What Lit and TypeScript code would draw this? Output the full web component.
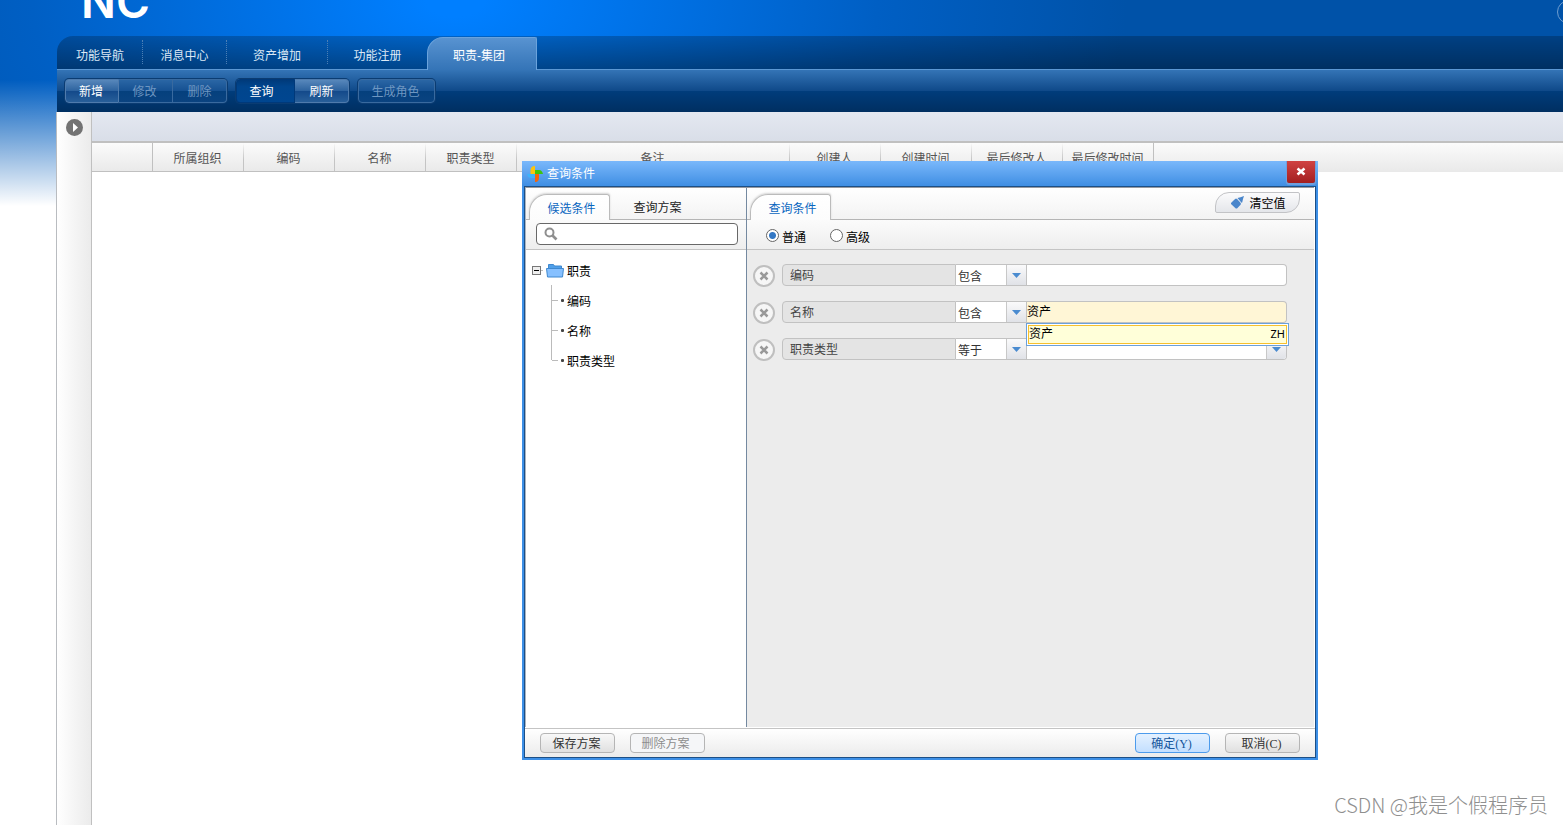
import { LitElement, html, css, svg } from "lit";
import { customElement, state } from "lit/decorators.js";

const TABS = [
  { label: "功能导航", width: 85 },
  { label: "消息中心", width: 84 },
  { label: "资产增加", width: 101 },
  { label: "功能注册", width: 100 },
];

const COLUMNS = [
  { label: "", width: 61 },
  { label: "所属组织", width: 91 },
  { label: "编码", width: 91 },
  { label: "名称", width: 91 },
  { label: "职责类型", width: 91 },
  { label: "备注", width: 273 },
  { label: "创建人", width: 91 },
  { label: "创建时间", width: 91 },
  { label: "最后修改人", width: 91 },
  { label: "最后修改时间", width: 91 },
];

const arrow = svg`<svg class="arrow" width="9" height="5" viewBox="0 0 9 5" aria-hidden="true"><path d="M0 0h9L4.5 5z" fill="#4a8bd0"/></svg>`;

@customElement("query-dialog")
export class QueryDialog extends LitElement {
  @state() private mode = "normal";

  static styles = css`
    :host {
      display: flex;
      flex-direction: column;
      box-sizing: border-box;
      background: #fff;
      border: solid #3d8fe6;
      border-width: 0 2px 2px;
      font: 12px/16px "Liberation Sans", "Noto Sans CJK SC", sans-serif;
      color: #000;
    }
    button, input, select { font: inherit; margin: 0; box-sizing: border-box; }
    .title {
      height: 25px;
      margin: 0 -2px;
      padding: 0 3px 0 5px;
      display: flex;
      align-items: center;
      background: linear-gradient(#7ab8fb, #3f8ee3);
      color: #fff;
    }
    .title svg { margin-right: 4px; }
    .title h1 { margin: 0; flex: 1; font: inherit; }
    .close {
      align-self: flex-start;
      width: 28px;
      height: 22px;
      padding: 0;
      border: 0;
      border-radius: 0 0 2px 2px;
      background: linear-gradient(#d04242, #a31f20);
      box-shadow: 0 1px 0 1px #6f9fdc;
      display: grid;
      place-items: center;
    }
    .title .close svg { margin: 0; }
    .frame {
      flex: 1;
      display: flex;
      flex-direction: column;
      border: 1px solid #1c4f86;
      background: #fff;
    }
    .panes { flex: 1; display: flex; margin: 0 1px 1px 0; border-top: 1px solid #97999f; border-left: 1px solid #a9b4c0; }
    .left { width: 220px; display: flex; flex-direction: column; border-right: 1px solid #7489a0; }
    .right { flex: 1; min-width: 0; background: #ececec; display: flex; flex-direction: column; }
    .tabs {
      height: 31px;
      padding-left: 3px;
      display: flex;
      align-items: flex-end;
      background: linear-gradient(#fff, #f3f3f3);
      border-bottom: 1px solid #b5b5b5;
    }
    .tab {
      height: 25px;
      width: 81px;
      padding: 2px 0 0;
      border: 0;
      background: none;
      color: #222;
    }
    .tab.other { margin-left: 7px; }
    .tab.on {
      height: 26px;
      margin-bottom: -1px;
      border: 1px solid #bbb;
      border-bottom: 0;
      border-radius: 18px 3px 0 0;
      background: linear-gradient(#fff, #fcfcfc);
      box-shadow: 0 -1px 2px #d4d4d4;
      color: #0a66bf;
      padding-top: 2px;
      padding-left: 4px;
    }
    .sub {
      height: 29px;
      background: linear-gradient(#fbfbfb, #eee);
      border-bottom: 1px solid #c4c4c4;
      display: flex;
      align-items: center;
    }
    .search {
      flex: 1;
      height: 22px;
      margin: 0 8px 2px 10px;
      display: flex;
      align-items: center;
      background: #fff;
      border: 1px solid #686868;
      border-radius: 4px;
      padding-left: 7px;
      box-sizing: border-box;
    }
    .search input { flex: 1; min-width: 0; border: 0; outline: 0; background: none; }
    .tree { flex: 1; margin: 0; padding: 5px 0 0 6px; list-style: none; }
    .node { display: flex; align-items: center; height: 30px; }
    .text { padding-top: 4px; }
    .box { width: 9px; height: 9px; box-sizing: border-box; border: 1px solid #777; background: #eee; display: grid; place-items: center; }
    .box i { width: 5px; height: 1px; background: #000; }
    .dash { width: 2px; height: 1px; background: #bbb; margin-right: 3px; }
    .folder { margin-right: 3px; }
    .kids { list-style: none; margin: 0; padding: 0 0 0 19px; }
    .kids .node { position: relative; padding-left: 10px; gap: 3px; }
    .kids .node::before { content: ""; position: absolute; left: 0; top: 0; height: 100%; border-left: 1px solid #bbb; }
    .kids .node:last-child::before { height: 15px; }
    .kids .node::after { content: ""; position: absolute; left: 1px; top: 15px; width: 6px; border-top: 1px solid #bbb; }
    .dot { width: 3px; height: 3px; border-radius: 1px; background: #444; }
    .spacer { flex: 1; }
    .clear {
      align-self: center;
      height: 21px;
      width: 85px;
      margin-right: 14px;
      margin-bottom: 2px;
      padding: 0 0 0 2px;
      display: flex;
      align-items: center;
      justify-content: center;
      gap: 5px;
      border: 1px solid #c2c3c6;
      border-radius: 14px 2px 14px 2px;
      background: linear-gradient(#fbfbfc, #e4e6ea);
      color: #000;
    }
    .clear .text { padding-top: 2px; }
    .radio { display: flex; align-items: center; gap: 3px; margin-left: 19px; padding-top: 2px; }
    .radio + .radio { margin-left: 24px; }
    .radio input {
      appearance: none;
      width: 13px;
      height: 13px;
      border: 1px solid #666;
      border-radius: 50%;
      background: #fff;
    }
    .radio input:checked { background: radial-gradient(circle, #3377c4 0 3px, #fff 4px); }
    .rows { padding: 14px 27px 0 6px; display: flex; flex-direction: column; gap: 15px; }
    .row { display: flex; height: 22px; }
    .remove {
      width: 22px;
      height: 22px;
      margin: 1px 7px -1px 0;
      padding: 0;
      border: 2px solid #bfbfbf;
      border-radius: 50%;
      background: #f6f6f6;
      display: grid;
      place-items: center;
    }
    .combo { flex: 1; display: flex; position: relative; }
    .name {
      width: 174px;
      box-sizing: border-box;
      padding: 3px 0 0 7px;
      border: 1px solid #c2c2c2;
      border-radius: 4px 0 0 4px;
      background: #e4e4e4;
      color: #444;
    }
    .pick { width: 71px; display: grid; grid-template-columns: 1fr 20px; border: solid #c2c2c2; border-width: 1px 1px 1px 0; box-sizing: border-box; }
    .pick select {
      grid-area: 1 / 1 / 2 / 3;
      appearance: none;
      border: 0;
      padding: 3px 2px 0;
      border-radius: 0;
      background: #fff;
      color: #333;
      outline: 0;
      min-width: 0;
      height: 20px;
    }
    .btn {
      grid-area: 1 / 2;
      pointer-events: none;
      display: grid;
      place-items: center;
      background: linear-gradient(#fafafb, #e0e2e7);
      border-left: 1px solid #c8c8c8;
    }
    .value {
      flex: 1;
      min-width: 0;
      border: 1px solid #c2c2c2;
      border-left: 0;
      border-radius: 0 4px 4px 0;
      background: #fff;
      padding: 0;
      outline: 0;
    }
    .value.hit { background: #fff6d6; }
    .wide { flex: 1; display: grid; grid-template-columns: 1fr 20px; border: 1px solid #c2c2c2; border-left: 0; border-radius: 0 4px 4px 0; overflow: hidden; box-sizing: border-box; }
    .wide select { grid-area: 1 / 1 / 2 / 3; appearance: none; border: 0; background: #fff; min-width: 0; outline: 0; }
    .suggest {
      position: absolute;
      z-index: 2;
      left: 244px;
      right: -2px;
      top: 22px;
      height: 23px;
      box-sizing: border-box;
      border: 1px solid #6ba1da;
      background: #fff;
      padding: 1px;
    }
    .option {
      width: 100%;
      height: 19px;
      padding: 0 1px 1px 0;
      border: 1px solid #f6c02e;
      background: #ffffd9;
      color: #000;
      display: flex;
      justify-content: space-between;
      align-items: center;
    }
    .option small { font: 11px/16px "Noto Sans", sans-serif; }
    .foot {
      height: 28px;
      padding: 0 15px;
      border-top: 1px solid #c4c4c4;
      background: linear-gradient(#fff, #ebebeb);
      display: flex;
      align-items: center;
      gap: 15px;
    }
    .foot button {
      width: 75px;
      height: 20px;
      padding: 2px 2px 0 0;
      border: 1px solid #b5b5b5;
      border-radius: 4px;
      background: linear-gradient(#f8f8f8, #e0e0e0);
      color: #333;
      line-height: 16px;
    }
    .foot button:disabled { background: #f5f6f8; color: #8d8d8d; padding: 1px 4px 0 0; }
    .foot .ok { border-color: #4c9bec; background: linear-gradient(#e4f1ff, #c3dfff); color: #16569c; }
    .foot kbd { font: 12px "Liberation Serif", serif; }
  `;

  private row(label: string, op: string, field: unknown, extra: unknown = "") {
    return html`<div class="row">
      <button class="remove" aria-label="删除"><svg width="10" height="10" viewBox="0 0 10 10"><path d="M1.500 1.500l7 7M8.500 1.500l-7 7" stroke="#999" stroke-width="2.500"/></svg></button>
      <div class="combo">
        <label class="name" for=${"v-" + label}>${label}</label>
        <div class="pick"><select aria-label=${label + "条件"}><option>${op}</option></select><span class="btn">${arrow}</span></div>
        ${field}${extra}
      </div>
    </div>`;
  }

  render() {
    return html`
      <div class="title">
        <svg width="16" height="16" viewBox="0 0 16 16" aria-hidden="true">
          <path d="M8 8H3.500V4Q4 0 7.500 0H8z" fill="#fbc40f"/><path d="M8 8V4h4q3 0 4 4z" fill="#3ec50c"/>
          <path d="M8 8h4v4q0 3-3 4H8z" fill="#f2650b"/><path d="M8 8v4H4Q1 12 0 8z" fill="#3db2fb"/>
        </svg>
        <h1>查询条件</h1>
        <button class="close" aria-label="关闭"><svg width="10" height="10" viewBox="0 0 10 10"><path d="M1.500 1.500l7 6M8.500 1.500l-7 6" stroke="#fff" stroke-width="2.500"/></svg></button>
      </div>
      <div class="frame">
        <div class="panes">
          <section class="left">
            <div class="tabs"><button class="tab on">候选条件</button><button class="tab other">查询方案</button></div>
            <div class="sub"><label class="search">
              <svg width="14" height="14" viewBox="0 0 14 14" aria-hidden="true"><circle cx="5.500" cy="5.500" r="4" fill="none" stroke="#8f8f8f" stroke-width="2"/><path d="M8.500 8.500l4 4" stroke="#8f8f8f" stroke-width="2.600"/></svg>
              <input type="text" aria-label="搜索"></label></div>
            <ul class="tree">
              <li>
                <div class="node"><span class="box"><i></i></span><span class="dash"></span>
                  <svg class="folder" width="18" height="15" viewBox="0 0 18 15" aria-hidden="true">
                    <path d="M2.500 6V1.500h5l1 1.500h7V6z" fill="#4f9fe9" stroke="#3f88cf"/>
                    <path d="M.500 5.500h17l-1 8.500h-15z" fill="#86c0ff" stroke="#3f88cf"/>
                  </svg><span class="text">职责</span></div>
                <ul class="kids">
                  ${["编码", "名称", "职责类型"].map((t) => html`<li class="node"><span class="dot"></span><span class="text">${t}</span></li>`)}
                </ul>
              </li>
            </ul>
          </section>
          <section class="right">
            <div class="tabs"><button class="tab on">查询条件</button><span class="spacer"></span>
              <button class="clear"><svg width="13" height="13" viewBox="0 0 13 13" aria-hidden="true"><path d="M0 7l4.300-4.300h1.600l4 4.500-.3 1.500L6 12.500H4.800L0 8z" fill="#4a86cb"/><path d="M6.500 2l3-.7L13 0l-1 3-.8 3.500-.7.300z" fill="#4a86cb"/></svg><span class="text">清空值</span></button></div>
            <div class="sub">
              ${[["normal", "普通"], ["advanced", "高级"]].map(([v, t]) => html`<label class="radio"><input type="radio" name="mode" .checked=${this.mode === v} @change=${() => (this.mode = v)}><span class="text">${t}</span></label>`)}
            </div>
            <div class="rows">
              ${this.row("编码", "包含", html`<input class="value" type="text" id="v-编码">`)}
              ${this.row("名称", "包含", html`<input class="value hit" type="text" id="v-名称" value="资产">`,
                html`<div class="suggest"><button class="option"><span>资产</span><small>ZH</small></button></div>`)}
              ${this.row("职责类型", "等于", html`<div class="wide"><select id="v-职责类型"><option></option></select><span class="btn">${arrow}</span></div>`)}
            </div>
          </section>
        </div>
        <footer class="foot">
          <button>保存方案</button><button disabled>删除方案</button><span class="spacer"></span>
          <button class="ok">确定<kbd>(Y)</kbd></button><button>取消<kbd>(C)</kbd></button>
        </footer>
      </div>`;
  }
}

@customElement("app-root")
export class AppRoot extends LitElement {
  static styles = css`
    :host {
      display: flex;
      flex-direction: column;
      position: relative;
      min-height: 100vh;
      overflow: hidden;
      background: linear-gradient(rgba(255, 255, 255, 0) 80px, #fff 206px), radial-gradient(ellipse 480px 280px at 455px 0, #007fff 6%, #005fc4 88%, #0052a8 140%) #0052a8;
      font: 12px/16px "Liberation Sans", "Noto Sans CJK SC", sans-serif;
    }
    button { font: inherit; margin: 0; padding: 0; }
    .banner { height: 36px; padding-left: 81px; overflow: hidden; display: flex; justify-content: space-between; align-items: flex-start; }
    .logo { font: 600 46px/38px "Inter", sans-serif; color: #fff; margin-top: -18px; }
    .round { width: 22px; height: 22px; margin-right: -18px; border: 1px solid #6f9dcf; border-radius: 50%; }
    .shell { flex: 1; display: flex; flex-direction: column; margin-left: 57px; }
    .nav {
      height: 33px;
      display: flex;
      align-items: flex-end;
      border-top-left-radius: 16px;
      background: linear-gradient(rgba(0, 0, 0, 0.22), rgba(0, 0, 0, 0.42));
    }
    .nav button { height: 33px; border: 0; background: none; color: #dce8f5; padding: 6px 0 0 1px; position: relative; }
    .nav .link::after { content: ""; position: absolute; right: -1px; top: 4px; height: 24px; border-right: 1px dotted #4c7fb5; }
    .nav .link:nth-child(4)::after { display: none; }
    .nav .current {
      width: 110px;
      height: 33px;
      margin-bottom: -1px;
      padding: 3px 6px 0 0;
      border: 1px solid #6ba3dc;
      border-bottom: 0;
      border-radius: 16px 2px 0 0;
      background: linear-gradient(#5893d1, #3474b7);
      color: #fff;
      z-index: 1;
    }
    .tools {
      height: 43px;
      display: flex;
      align-items: flex-start;
      gap: 9px;
      border-top: 1px solid #5c98d4;
      padding: 9px 8px 0;
      box-sizing: border-box;
      background: linear-gradient(#3474b6, #0e4888 51%, #003c7b 51%, #002f61);
    }
    .group { display: flex; border-radius: 4px; box-shadow: 0 0 0 1px #0b3c72; }
    .group button {
      width: 54px;
      height: 24px;
      padding: 2px 2px 0 0;
      border: 1px solid #396a9f;
      border-left-width: 0;
      background: linear-gradient(#2a66a5, #155091 50%, #05407d 50%, #0a4380);
      color: #6e96c1;
    }
    .group button:first-child { border-left-width: 1px; border-radius: 4px 0 0 4px; }
    .group button:last-child { border-radius: 0 4px 4px 0; padding-right: 0; }
    .group .live { border-color: #4f7bad; background: linear-gradient(#5787bb, #2c629e 50%, #13498a 50%, #285f9a); color: #fff; }
    .group .down { width: 59px; border-color: #00397a; background: linear-gradient(#003a7a, #00458d 30%, #004690); color: #fff; padding-right: 8px; }
    .group .solo:last-child { width: 77px; border-radius: 4px; padding-right: 2px; }
    .body { flex: 1; display: flex; background: #fff; margin-left: -1px; border-left: 1px solid #b9bcc0; }
    .rail { width: 34px; border-right: 1px solid #c0c0c0; background: linear-gradient(90deg, #fff, #ebebeb); }
    .rail button { display: block; width: 17px; height: 17px; margin: 7px 0 0 9px; border: 0; background: none; }
    .main { flex: 1; min-width: 0; }
    .band { height: 29px; background: linear-gradient(#e4e8f1, #d9dee8); border-bottom: 2px solid #c0c0c0; }
    .head { background: linear-gradient(#fbfbfb, #e9e9e9); height: 29px; overflow: hidden; }
    table { border-collapse: separate; border-spacing: 0; table-layout: fixed; width: 1062px; }
    th {
      height: 29px;
      padding: 3px 2px 0 0;
      box-sizing: border-box;
      font-weight: normal;
      color: #555;
      border-bottom: 1px solid #c0c0c0;
      background: linear-gradient(transparent, #c4c4c4 60%) right / 1px 100% no-repeat;
      white-space: nowrap;
    }
    th:first-child, th:last-child { background: linear-gradient(#c0c0c0, #c0c0c0) right / 1px 100% no-repeat; }
    .window { position: absolute; left: 522px; top: 161px; width: 796px; height: 599px; }
    .mark { position: absolute; right: 15px; bottom: 6px; font: 300 20px/28px "Noto Sans CJK SC", sans-serif; color: #8f8f8f; text-shadow: 1px 1px 0 #fff; }
  `;

  render() {
    return html`
      <header class="banner"><span class="logo">NC</span><span class="round"></span></header>
      <div class="shell">
        <nav class="nav">
          ${TABS.map((t) => html`<button class="link" style="width:${t.width}px">${t.label}</button>`)}
          <button class="current">职责-集团</button>
        </nav>
        <div class="tools">
          <div class="group"><button class="live">新增</button><button>修改</button><button>删除</button></div>
          <div class="group"><button class="down">查询</button><button class="live">刷新</button></div>
          <div class="group"><button class="solo">生成角色</button></div>
        </div>
        <div class="body">
          <aside class="rail"><button aria-label="展开"><svg width="17" height="17" viewBox="0 0 17 17"><circle cx="8.500" cy="8.500" r="8.500" fill="#737373"/><path d="M7 4l5 4.500L7 13z" fill="#fff"/></svg></button></aside>
          <main class="main">
            <div class="band"></div>
            <div class="head"><table>
              <colgroup>${COLUMNS.map((c) => html`<col style="width:${c.width}px">`)}</colgroup>
              <thead><tr>${COLUMNS.map((c) => html`<th>${c.label}</th>`)}</tr></thead>
            </table></div>
          </main>
        </div>
      </div>
      <query-dialog class="window" role="dialog" aria-label="查询条件"></query-dialog>
      <span class="mark">CSDN @我是个假程序员</span>`;
  }
}
